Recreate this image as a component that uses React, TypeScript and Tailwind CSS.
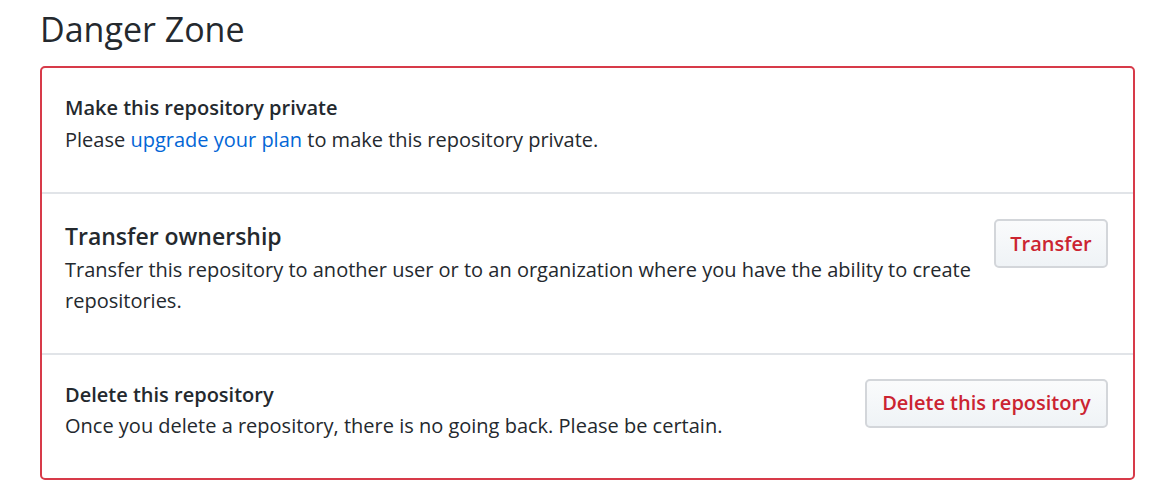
export default function App() {
  const btn =
    "shrink-0 h-[49px] rounded-[5px] border-2 border-[#d3d6da] bg-linear-to-b from-[#fafbfc] to-[#eff3f6] text-[20px] font-semibold leading-[30px] text-[#cb2431] flex items-center justify-center";
  return (
    <div
      className="bg-white text-[#24292e] pl-[40px] pr-[29px] pt-[8px] pb-[11px]"
      style={{ fontFamily: '"Open Sans", "Noto Sans", sans-serif' }}
    >
      <h2 className="text-[34px] leading-[42px] font-normal mb-[16px]">Danger Zone</h2>
      <div className="border-2 border-[#d73a49] rounded-[5px]">
        <div className="pl-[23px] pr-[25px] pt-[24px] pb-[37px] text-[20px] leading-[31.5px]">
          <div className="font-semibold">Make this repository private</div>
          <div>
            Please <a className="text-[#0366d6]">upgrade your plan</a> to make this repository private.
          </div>
        </div>
        <div className="border-t-2 border-[#e1e4e8] pl-[23px] pr-[25px] pt-[25px] pb-[36px] flex items-start">
          <div className="flex-1 mr-[14px]">
            <div className="text-[23px] leading-[34.5px] font-semibold">Transfer ownership</div>
            <div className="text-[20px] leading-[31.5px]">
              Transfer this repository to another user or to an organization where you have the ability to create
              repositories.
            </div>
          </div>
          <button className={btn + " w-[114px]"}>Transfer</button>
        </div>
        <div className="border-t-2 border-[#e1e4e8] pl-[23px] pr-[25px] pt-[24px] pb-[36px] flex items-start">
          <div className="flex-1 mr-[14px] text-[20px] leading-[31.5px]">
            <div className="font-semibold">Delete this repository</div>
            <div>Once you delete a repository, there is no going back. Please be certain.</div>
          </div>
          <button className={btn + " w-[243px]"}>Delete this repository</button>
        </div>
      </div>
    </div>
  );
}
